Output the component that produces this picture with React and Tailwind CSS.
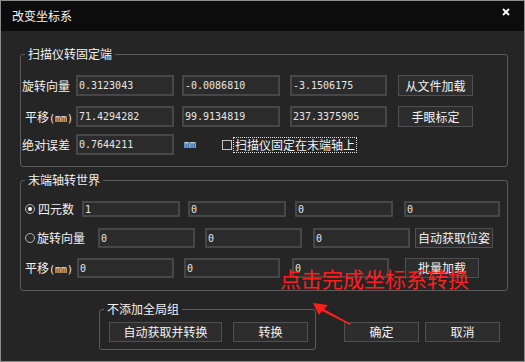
import { useState } from "react";

const cjk = { fontFamily: '"Noto Sans CJK SC", "Noto Sans", sans-serif' };
const mono = { fontFamily: '"DejaVu Sans Mono", "Liberation Mono", monospace' };

const Field = ({ value, className = "" }) => (
  <div
    className={`flex items-center border-2 border-[#474747] bg-[#2b2b2b] pl-[1px] text-[10px] text-[#e6e6e6] ${className}`}
    style={mono}
  >
    {value}
  </div>
);

const Btn = ({ children, className = "" }) => (
  <button
    className={`flex items-center justify-center border border-[#505050] bg-[#2d2d2d] text-[12px] leading-none text-[#f2f2f2] ${className}`}
  >
    {children}
  </button>
);

const Group = ({ title, className = "", children }) => (
  <fieldset className={`rounded-[3px] border border-[#5c5c5c] ${className}`}>
    <legend className="ml-[4px] px-[3px] text-[12px] leading-[16px] text-[#f2f2f2]">
      {title}
    </legend>
    {children}
  </fieldset>
);

const Radio = ({ checked, onClick }) => (
  <span
    onClick={onClick}
    className="flex h-[10px] w-[10px] shrink-0 items-center justify-center rounded-full border border-[#b4b4b4] bg-[#2a2a2a]"
  >
    {checked && <span className="h-[4px] w-[4px] rounded-full bg-white" />}
  </span>
);

// "平移(mm)" label, kept on one line
const MmLabel = () => (
  <span className="flex items-baseline whitespace-nowrap text-[12px]">
    平移
    <span className="text-[10px]" style={mono}>(mm)</span>
  </span>
);

export default function App() {
  const [mode, setMode] = useState("quat");

  return (
    <div
      className="relative flex h-[362px] w-[525px] flex-col overflow-hidden border border-[#8c8c8c] bg-[#252525] text-[#f2f2f2]"
      style={cjk}
    >
      {/* TITLE BAR */}
      <div className="flex h-[30px] shrink-0 items-center justify-between bg-[#0c0c0c] pl-[11px] pr-[14px]">
        <span className="text-[12px] leading-none text-[#f4f4f4]">改变坐标系</span>
        <svg width="8" height="8" viewBox="0 0 8 8" className="mb-[8px]">
          <path d="M1 1L7 7M7 1L1 7" stroke="#ffffff" strokeWidth="1.8" />
        </svg>
      </div>

      <div className="flex flex-col pl-[19px]">
        {/* SCANNER -> FLANGE */}
        <Group title="扫描仪转固定端" className="mt-[15px] w-[488px] pb-[11px]">
          <div className="mt-[13px] flex h-[21px] items-center">
            <span className="w-[55px] shrink-0 whitespace-nowrap pl-[1px] text-[12px]">旋转向量</span>
            <Field value="0.3123043" className="h-full w-[98px]" />
            <Field value="-0.0086810" className="ml-[8px] h-full w-[98px]" />
            <Field value="-3.1506175" className="ml-[10px] h-full w-[97px]" />
            <Btn className="ml-[11px] h-full w-[75px]">从文件加载</Btn>
          </div>
          <div className="mt-[10px] flex h-[21px] items-center">
            <div className="w-[55px] shrink-0 pl-[4px]">
              <MmLabel />
            </div>
            <Field value="71.4294282" className="h-full w-[98px]" />
            <Field value="99.9134819" className="ml-[8px] h-full w-[98px]" />
            <Field value="237.3375905" className="ml-[10px] h-full w-[97px]" />
            <Btn className="ml-[11px] h-full w-[75px]">手眼标定</Btn>
          </div>
          <div className="mt-[7px] flex h-[21px] items-center">
            <span className="w-[55px] shrink-0 whitespace-nowrap pl-[1px] text-[12px]">绝对误差</span>
            <Field value="0.7644211" className="h-full w-[98px]" />
            <span className="ml-[10px] text-[10px]" style={mono}>mm</span>
            <span className="ml-[26px] h-[10px] w-[10px] border border-[#c4c4c4]" />
            <span className="ml-[1px] border border-dotted border-[#e0e0e0] px-[1px] text-[12px] leading-[14px]">
              扫描仪固定在末端轴上
            </span>
          </div>
        </Group>

        {/* FLANGE -> WORLD */}
        <Group title="末端轴转世界" className="mt-[5px] w-[488px] pb-[12px]">
          <div className="mt-[13px] flex h-[16px] items-center">
            <div className="flex w-[61px] shrink-0 items-center pl-[4px]" onClick={() => setMode("quat")}>
              <Radio checked={mode === "quat"} />
              <span className="ml-[3px] whitespace-nowrap text-[12px]">四元数</span>
            </div>
            <Field value="1" className="h-full w-[98px]" />
            <Field value="0" className="ml-[8px] h-full w-[98px]" />
            <Field value="0" className="ml-[9px] h-full w-[98px]" />
            <Field value="0" className="ml-[11px] h-full w-[96px]" />
          </div>
          <div className="mt-[11px] flex h-[20px] items-center">
            <div className="flex w-[77px] shrink-0 items-center pl-[4px]" onClick={() => setMode("rot")}>
              <Radio checked={mode === "rot"} />
              <span className="ml-[2px] whitespace-nowrap text-[12px]">旋转向量</span>
            </div>
            <Field value="0" className="h-full w-[97px]" />
            <Field value="0" className="ml-[10px] h-full w-[97px]" />
            <Field value="0" className="ml-[11px] h-full w-[97px]" />
            <Btn className="ml-[5px] h-full w-[78px]">自动获取位姿</Btn>
          </div>
          <div className="mt-[10px] flex h-[20px] items-center">
            <div className="w-[56px] shrink-0 pl-[4px]">
              <MmLabel />
            </div>
            <Field value="0" className="h-full w-[97px]" />
            <Field value="0" className="ml-[10px] h-full w-[96px]" />
            <Field value="0" className="ml-[12px] h-full w-[97px]" />
            <Btn className="ml-[16px] h-full w-[74px]">批量加载</Btn>
          </div>
        </Group>

        {/* BOTTOM ROW */}
        <div className="mt-[10px] flex items-start">
          <Group title="不添加全局组" className="ml-[79px] w-[217px] pb-[7px]">
            <div className="mt-[5px] flex h-[20px] pl-[9px]">
              <Btn className="h-full w-[113px]">自动获取并转换</Btn>
              <Btn className="ml-[11px] h-full w-[75px]">转换</Btn>
            </div>
          </Group>
          <Btn className="ml-[28px] mt-[21px] h-[20px] w-[75px]">确定</Btn>
          <Btn className="ml-[6px] mt-[21px] h-[20px] w-[75px]">取消</Btn>
        </div>
      </div>

      {/* ANNOTATION */}
      <span className="pointer-events-none absolute left-[279px] top-[265px] text-[21px] leading-[24px] text-[#ff1e1e]">
        点击完成坐标系转换
      </span>
      <svg
        className="pointer-events-none absolute left-[305px] top-[296px]"
        width="50"
        height="32"
        viewBox="0 0 50 32"
      >
        <polygon points="7,6 22,8 18,12 45,27 44,28 16,14 13,18" fill="#ff1e1e" />
      </svg>
    </div>
  );
}
